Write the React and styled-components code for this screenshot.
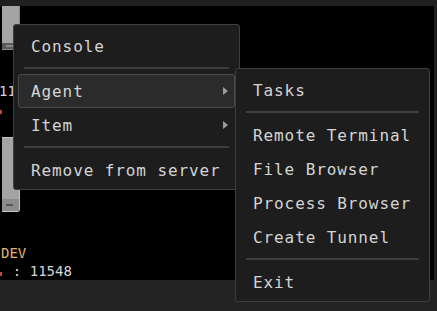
import React from 'react'
import styled, { createGlobalStyle } from 'styled-components'

const GlobalStyle = createGlobalStyle`
  html, body {
    margin: 0;
    padding: 0;
    background: #1f1f1f;
  }
`;

const mainItems = [
  { label: "Console" },
  { sep: true },
  { label: "Agent", sub: true, active: true },
  { label: "Item", sub: true },
  { sep: true },
  { label: "Remove from server" },
];

const agentItems = [
  { label: "Tasks" },
  { sep: true },
  { label: "Remote Terminal" },
  { label: "File Browser" },
  { label: "Process Browser" },
  { label: "Create Tunnel" },
  { sep: true },
  { label: "Exit" },
];

function MenuList({ items }) {
  return items.map((item, i) =>
    item.sep ? (
      <Separator key={i} />
    ) : (
      <MenuItem key={i} $active={item.active}>
        <span>{item.label}</span>
        {item.sub && <Arrow />}
      </MenuItem>
    )
  );
}

function App() {
  return (
    <Frame>
      <GlobalStyle />
      <TopBar />
      <Middle>
        <Canvas>
          {/* session nodes, mostly hidden behind the menus */}
          <Thumb $top={-40} $height={84} />
          <NodeLabel $top={76} $left={-1}>
            11548{"\n"}<Mark $x={1} />
          </NodeLabel>
          <Thumb $top={131} $height={75} $light />
          <NodeLabel $top={238} $left={-4}>
            <Dev>DEV</Dev><Mark $x={4} /> : 11548
          </NodeLabel>
        </Canvas>
        <Gutter />
      </Middle>
      <BottomBar />

      <Menu $left={13} $top={24} $width={227}>
        <MenuList items={mainItems} />
      </Menu>
      <Menu $left={235} $top={68} $width={195}>
        <MenuList items={agentItems} />
      </Menu>
    </Frame>
  )
}

export default App

const Frame = styled.div`
  position: relative;
  width: 437px;
  height: 311px;
  overflow: hidden;
  display: flex;
  flex-direction: column;
  background: #1f1f1f;
  font-family: "DejaVu Sans Mono", "Liberation Mono", monospace;
`;

const TopBar = styled.div`
  height: 6px;
  background: #1f1f1f;
`;

const Middle = styled.div`
  display: flex;
  height: 274px;
`;

const Canvas = styled.div`
  position: relative;
  flex: 1;
  background: #000;
  overflow: hidden;
`;

const Gutter = styled.div`
  width: 3px;
  background: #1f1f1f;
`;

const BottomBar = styled.div`
  flex: 1;
  background: #232323;
`;

const Thumb = styled.div`
  position: absolute;
  left: 2px;
  top: ${(p) => p.$top}px;
  width: 18px;
  height: ${(p) => p.$height}px;
  background: #a4a4a4;
  border: 1px solid ${(p) => (p.$light ? "#c4c4c4" : "#8a8a8a")};
  border-left: none;
  border-radius: 0 0 3px 0;
  box-sizing: border-box;
  display: flex;
  flex-direction: column;
  justify-content: flex-end;

  &::after {
    content: "";
    height: ${(p) => (p.$light ? 12 : 6)}px;
    background: ${(p) => (p.$light ? "#8c8c8c" : "#5a5a5a")}
      linear-gradient(${(p) => (p.$light ? "#555" : "#8a8a8a")}, ${(p) => (p.$light ? "#555" : "#8a8a8a")})
      no-repeat 4px center / 7px 2px;
  }
`;

const NodeLabel = styled.div`
  position: absolute;
  left: ${(p) => p.$left}px;
  top: ${(p) => p.$top}px;
  font-size: 14px;
  line-height: 18px;
  white-space: pre;
  color: #d2d6dc;
`;

const Dev = styled.span`
  display: block;
  padding-left: 5px;
  color: #e3b06e;
`;

const Mark = styled.span`
  display: inline-block;
  width: 1ch;
  height: 4px;
  background: linear-gradient(#c8423a, #c8423a) no-repeat ${(p) => p.$x}px 0 / 2px 4px;
`;

const Menu = styled.div`
  position: absolute;
  left: ${(p) => p.$left}px;
  top: ${(p) => p.$top}px;
  width: ${(p) => p.$width}px;
  box-sizing: border-box;
  padding: 4px 4px 2px;
  background: #1d1d1d;
  border: 1px solid #3e3e3e;
  border-radius: 3px;
`;

const MenuItem = styled.div`
  height: 34px;
  box-sizing: border-box;
  display: flex;
  align-items: center;
  justify-content: space-between;
  padding: 0 6px 0 12px;
  font-size: 16px;
  letter-spacing: 0.9px;
  color: #d4d4d4;
  white-space: nowrap;
  border: 1px solid ${(p) => (p.$active ? "#4a4a4a" : "transparent")};
  border-radius: 3px;
  background: ${(p) => (p.$active ? "#2b2b2b" : "transparent")};
`;

const Arrow = styled.span`
  width: 0;
  height: 0;
  border-left: 5px solid #9c9c9c;
  border-top: 4px solid transparent;
  border-bottom: 4px solid transparent;
`;

const Separator = styled.div`
  height: 2px;
  margin: 4px 6px 5px;
  background: #3e3e3e;
`;
